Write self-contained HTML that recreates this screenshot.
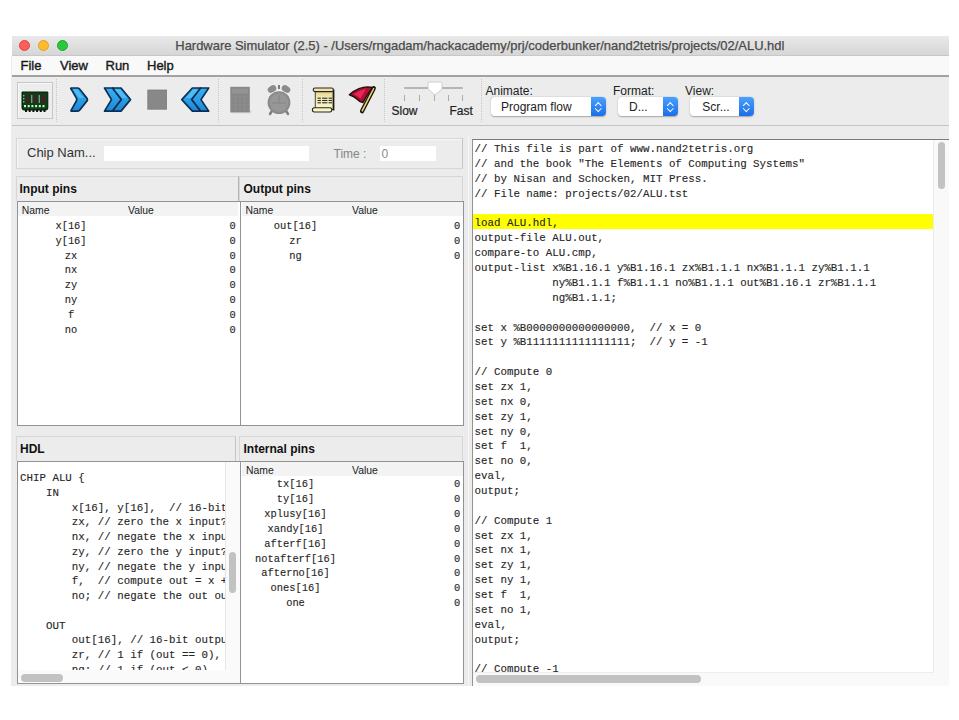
<!DOCTYPE html>
<html><head><meta charset="utf-8">
<style>
*{margin:0;padding:0;box-sizing:border-box}
html,body{width:959px;height:720px;overflow:hidden;background:#fff;font-family:"Liberation Sans",sans-serif;color:#222}
.a{position:absolute}
#win{left:12px;top:36px;width:936.5px;height:650px;background:#ececec;overflow:hidden}
#title{left:0;top:0;width:937px;height:20px;background:linear-gradient(#e9e9e9,#d6d6d6);border-bottom:1px solid #c8c8c8}
.tl{width:11px;height:11px;border-radius:50%;top:4px}
#ttext{left:163.3px;top:2px;font-size:12.95px;color:#4a4a4a;-webkit-text-stroke:0.25px #4a4a4a;white-space:nowrap}
#menu{left:0;top:20px;width:937px;height:19px;background:#f9f9f9}
.mi{top:2px;font-size:13px;color:#1a1a1a;-webkit-text-stroke:0.4px #1a1a1a}
#tbbg{left:0;top:39px;width:937px;height:50.5px;background:#ececec;border-top:2px solid #a2a2a2;border-bottom:1.5px solid #c4c4c4}
#tb{left:0;top:0;width:0;height:0}
.sep{width:1px;border-left:1px dotted #c6c6c6}
.hdr{font-weight:bold;font-size:12px;color:#111}
.tbl{background:#fff;border:1px solid #939393}
.th{font-size:10.4px;color:#222;margin-top:1.8px}
.row{font-family:"Liberation Mono",monospace;font-size:10.4px;color:#262626;-webkit-text-stroke:0.12px #262626;white-space:pre}
#code{left:459.5px;top:103px;width:477px;height:547px;background:#fff;border-top:1.5px solid #7a7a7a;border-left:1px solid #939393;overflow:hidden}
.cl{white-space:pre;font-family:"Liberation Mono",monospace;font-size:10.8px;color:#262626;-webkit-text-stroke:0.12px #262626;line-height:14.87px;height:14.87px}
.hl{white-space:pre;font-family:"Liberation Mono",monospace;font-size:10.8px;color:#262626;-webkit-text-stroke:0.12px #262626;line-height:14.75px;height:14.75px}
.combo{height:19px;background:#fff;border-radius:4px;box-shadow:0 0.5px 1.5px rgba(0,0,0,0.3)}
.combo span{position:absolute;top:3.3px;font-size:12px;color:#222;white-space:nowrap}
.combo i{position:absolute;right:0;top:0;width:15px;height:19px;background:linear-gradient(#4aa0ff,#1a6fe8);border-radius:0 4px 4px 0}
.combo i:before{content:"";position:absolute;left:5px;top:5.5px;width:3.5px;height:3.5px;border-left:1.3px solid #fff;border-top:1.3px solid #fff;transform:rotate(45deg)}
.combo i:after{content:"";position:absolute;left:5px;top:9.2px;width:3.5px;height:3.5px;border-right:1.3px solid #fff;border-bottom:1.3px solid #fff;transform:rotate(45deg)}
.hbox{border:1px solid #d6d6d6;border-bottom:none;background:#ececec}
.thr{background:#f3f3f3}
</style></head><body>
<div class="a" style="left:10.5px;top:56px;width:2px;height:630px;background:#ebebeb"></div>
<div id="win" class="a">
  <div id="title" class="a">
    <div class="a tl" style="left:7px;background:#fc5f57;border:0.5px solid #e0443e"></div>
    <div class="a tl" style="left:25.5px;background:#fdbc2e;border:0.5px solid #dea123"></div>
    <div class="a tl" style="left:44.5px;background:#28c840;border:0.5px solid #1aab29"></div>
    <div id="ttext" class="a">Hardware Simulator (2.5) - /Users/rngadam/hackacademy/prj/coderbunker/nand2tetris/projects/02/ALU.hdl</div>
  </div>
  <div id="menu" class="a">
    <div class="a mi" style="left:8.5px">File</div>
    <div class="a mi" style="left:48px">View</div>
    <div class="a mi" style="left:93.5px">Run</div>
    <div class="a mi" style="left:135px">Help</div>
  </div>
  <div id="tbbg" class="a"></div>
  <div id="tb" class="a">
    <div class="a" style="left:5px;top:46.3px;width:36px;height:36.3px;border:1px solid #c6c6c6;background:#ededed;box-shadow:inset 1px 1px 0 #f8f8f8"></div>
    <div class="a sep" style="left:44px;top:43px;height:43px"></div>
    <div class="a sep" style="left:205.5px;top:43px;height:43px"></div>
    <div class="a sep" style="left:290px;top:43px;height:43px"></div>
    <div class="a sep" style="left:372px;top:43px;height:43px"></div>
    <div class="a" style="left:391.5px;top:50.6px;width:59px;height:2px;background:#b5b5b5;border-radius:1px"></div>
    <div class="a" style="left:392px;top:58.8px;width:1px;height:6px;background:#aaa"></div>
    <div class="a" style="left:406.5px;top:58.8px;width:1px;height:6px;background:#aaa"></div>
    <div class="a" style="left:421.5px;top:58.8px;width:1px;height:6px;background:#aaa"></div>
    <div class="a" style="left:435.5px;top:58.8px;width:1px;height:6px;background:#aaa"></div>
    <div class="a" style="left:449.6px;top:58.8px;width:1px;height:6px;background:#aaa"></div>
    <svg class="a" style="left:414.5px;top:44.5px" width="16" height="15" viewBox="0 0 16 15">
      <path d="M1 2.5 Q1 1 2.5 1 H13.5 Q15 1 15 2.5 V8 L8 14 L1 8 Z" fill="#fff" stroke="#c4c4c4" stroke-width="0.8"/>
    </svg>
    <div class="a" style="left:379.5px;top:68.3px;font-size:12px;color:#222;-webkit-text-stroke:0.2px #222">Slow</div>
    <div class="a" style="left:437.5px;top:68.3px;font-size:12px;color:#222;-webkit-text-stroke:0.2px #222">Fast</div>
    <div class="a sep" style="left:468.7px;top:43px;height:43px"></div>
    <div class="a" style="left:473.5px;top:47.5px;font-size:12px;color:#222">Animate:</div>
    <div class="a" style="left:601px;top:47.5px;font-size:12px;color:#222">Format:</div>
    <div class="a" style="left:673px;top:47.5px;font-size:12px;color:#222">View:</div>
    <div class="a combo" style="left:479px;top:61px;width:115px"><span style="left:10px">Program flow</span><i></i></div>
    <div class="a combo" style="left:606px;top:61px;width:60px"><span style="left:11px">D...</span><i></i></div>
    <div class="a combo" style="left:677.8px;top:61px;width:64px"><span style="left:12.5px">Scr...</span><i></i></div>
  </div>

  <!-- chip name panel -->
  <div class="a" style="left:4px;top:101.5px;width:446.5px;height:31px;border:1px solid #d6d6d6;border-right-color:#c4c4c4;box-shadow:inset 1px 1px 0 #f6f6f6"></div>
  <div class="a" style="left:15px;top:109px;font-size:13px;color:#333">Chip Nam...</div>
  <div class="a" style="left:91.5px;top:109.5px;width:205px;height:15.5px;background:#fff"></div>
  <div class="a" style="left:321.5px;top:111.3px;font-size:12px;color:#858585">Time :</div>
  <div class="a" style="left:367.5px;top:109.5px;width:56.5px;height:15.5px;background:#fff"></div>
  <div class="a" style="left:369.5px;top:111.3px;font-size:12px;color:#8a8a8a">0</div>

  <!-- input pins -->
  <div class="a hbox" style="left:4px;top:140px;width:223px;height:25px;border-right-color:#b4b4b4"></div>
  <div class="a hdr" style="left:7.5px;top:146px">Input pins</div>
  <div class="a tbl" style="left:5px;top:165px;width:224px;height:225px"></div>
  <div class="a thr" style="left:6px;top:166px;width:219.5px;height:13.5px"></div>
  <div class="a th" style="left:9.8px;top:167px">Name</div>
  <div class="a th" style="left:116px;top:167px">Value</div>
  <div class="a row" style="left:59.0px;top:184.00px;width:120px;margin-left:-60px;text-align:center">x[16]</div>
<div class="a row" style="left:217.5px;top:184.00px">0</div>
<div class="a row" style="left:59.0px;top:198.80px;width:120px;margin-left:-60px;text-align:center">y[16]</div>
<div class="a row" style="left:217.5px;top:198.80px">0</div>
<div class="a row" style="left:59.0px;top:213.60px;width:120px;margin-left:-60px;text-align:center">zx</div>
<div class="a row" style="left:217.5px;top:213.60px">0</div>
<div class="a row" style="left:59.0px;top:228.40px;width:120px;margin-left:-60px;text-align:center">nx</div>
<div class="a row" style="left:217.5px;top:228.40px">0</div>
<div class="a row" style="left:59.0px;top:243.20px;width:120px;margin-left:-60px;text-align:center">zy</div>
<div class="a row" style="left:217.5px;top:243.20px">0</div>
<div class="a row" style="left:59.0px;top:258.00px;width:120px;margin-left:-60px;text-align:center">ny</div>
<div class="a row" style="left:217.5px;top:258.00px">0</div>
<div class="a row" style="left:59.0px;top:272.80px;width:120px;margin-left:-60px;text-align:center">f</div>
<div class="a row" style="left:217.5px;top:272.80px">0</div>
<div class="a row" style="left:59.0px;top:287.60px;width:120px;margin-left:-60px;text-align:center">no</div>
<div class="a row" style="left:217.5px;top:287.60px">0</div>

  <!-- output pins -->
  <div class="a hbox" style="left:226.5px;top:140px;width:224.5px;height:25px"></div>
  <div class="a hdr" style="left:231.5px;top:146px">Output pins</div>
  <div class="a tbl" style="left:228px;top:165px;width:224px;height:225px"></div>
  <div class="a thr" style="left:229.5px;top:166px;width:221.5px;height:13.5px"></div>
  <div class="a th" style="left:233.5px;top:167px">Name</div>
  <div class="a th" style="left:340px;top:167px">Value</div>
  <div class="a row" style="left:283.5px;top:183.80px;width:120px;margin-left:-60px;text-align:center">out[16]</div>
<div class="a row" style="left:442.0px;top:183.80px">0</div>
<div class="a row" style="left:283.5px;top:198.75px;width:120px;margin-left:-60px;text-align:center">zr</div>
<div class="a row" style="left:442.0px;top:198.75px">0</div>
<div class="a row" style="left:283.5px;top:213.70px;width:120px;margin-left:-60px;text-align:center">ng</div>
<div class="a row" style="left:442.0px;top:213.70px">0</div>

  <!-- HDL -->
  <div class="a hbox" style="left:4px;top:399.5px;width:219.5px;height:25.5px;border-right-color:#c4c4c4"></div>
  <div class="a hdr" style="left:8px;top:406px">HDL</div>
  <div class="a tbl" style="left:5px;top:425px;width:224.5px;height:223px;border-right:none;overflow:hidden">
    <div class="a" style="left:0;top:0;width:206.5px;height:208px;overflow:hidden">
      <div class="a" style="left:2px;top:9px"><div class="hl">CHIP ALU {</div>
<div class="hl">    IN</div>
<div class="hl">        x[16], y[16],  // 16-bit inputs</div>
<div class="hl">        zx, // zero the x input?</div>
<div class="hl">        nx, // negate the x input?</div>
<div class="hl">        zy, // zero the y input?</div>
<div class="hl">        ny, // negate the y input?</div>
<div class="hl">        f,  // compute out = x + y (if 1) or x &amp; y (if 0)</div>
<div class="hl">        no; // negate the out output?</div>
<div class="hl"> </div>
<div class="hl">    OUT</div>
<div class="hl">        out[16], // 16-bit output</div>
<div class="hl">        zr, // 1 if (out == 0), 0 otherwise</div>
<div class="hl">        ng; // 1 if (out &lt; 0),  0 otherwise</div></div>
    </div>
    <div class="a" style="left:206.5px;top:0;width:17px;height:208px;background:#fafafa;border-left:1px solid #e6e6e6"></div>
    <div class="a" style="left:210.5px;top:89.8px;width:7.5px;height:41px;background:#c2c2c2;border-radius:4px"></div>
    <div class="a" style="left:0;top:208px;width:224px;height:14px;background:#fafafa"></div>
    <div class="a" style="left:3px;top:212px;width:42px;height:7.5px;background:#c2c2c2;border-radius:4px"></div>
  </div>

  <!-- internal pins -->
  <div class="a hbox" style="left:226.5px;top:399.5px;width:224px;height:25.5px"></div>
  <div class="a hdr" style="left:231.5px;top:406px">Internal pins</div>
  <div class="a tbl" style="left:228px;top:425px;width:224px;height:223px"></div>
  <div class="a thr" style="left:229.5px;top:426px;width:221.5px;height:13.5px"></div>
  <div class="a th" style="left:234px;top:427px">Name</div>
  <div class="a th" style="left:340px;top:427px">Value</div>
  <div class="a row" style="left:283.5px;top:442.20px;width:120px;margin-left:-60px;text-align:center">tx[16]</div>
<div class="a row" style="left:442.0px;top:442.20px">0</div>
<div class="a row" style="left:283.5px;top:457.07px;width:120px;margin-left:-60px;text-align:center">ty[16]</div>
<div class="a row" style="left:442.0px;top:457.07px">0</div>
<div class="a row" style="left:283.5px;top:471.94px;width:120px;margin-left:-60px;text-align:center">xplusy[16]</div>
<div class="a row" style="left:442.0px;top:471.94px">0</div>
<div class="a row" style="left:283.5px;top:486.81px;width:120px;margin-left:-60px;text-align:center">xandy[16]</div>
<div class="a row" style="left:442.0px;top:486.81px">0</div>
<div class="a row" style="left:283.5px;top:501.68px;width:120px;margin-left:-60px;text-align:center">afterf[16]</div>
<div class="a row" style="left:442.0px;top:501.68px">0</div>
<div class="a row" style="left:283.5px;top:516.55px;width:120px;margin-left:-60px;text-align:center">notafterf[16]</div>
<div class="a row" style="left:442.0px;top:516.55px">0</div>
<div class="a row" style="left:283.5px;top:531.42px;width:120px;margin-left:-60px;text-align:center">afterno[16]</div>
<div class="a row" style="left:442.0px;top:531.42px">0</div>
<div class="a row" style="left:283.5px;top:546.29px;width:120px;margin-left:-60px;text-align:center">ones[16]</div>
<div class="a row" style="left:442.0px;top:546.29px">0</div>
<div class="a row" style="left:283.5px;top:561.16px;width:120px;margin-left:-60px;text-align:center">one</div>
<div class="a row" style="left:442.0px;top:561.16px">0</div>

  <div class="a" style="left:455.5px;top:101px;width:1px;height:549px;background:#f7f7f7"></div>
  <div id="code" class="a">
    <div class="a" style="left:0;top:73.95px;width:461px;height:14.6px;background:#ffff00"></div>
    <div class="a" style="left:2px;top:2.2px;width:461px"><div class="cl">// This file is part of www.nand2tetris.org</div>
<div class="cl">// and the book &quot;The Elements of Computing Systems&quot;</div>
<div class="cl">// by Nisan and Schocken, MIT Press.</div>
<div class="cl">// File name: projects/02/ALU.tst</div>
<div class="cl"> </div>
<div class="cl">load ALU.hdl,</div>
<div class="cl">output-file ALU.out,</div>
<div class="cl">compare-to ALU.cmp,</div>
<div class="cl">output-list x%B1.16.1 y%B1.16.1 zx%B1.1.1 nx%B1.1.1 zy%B1.1.1</div>
<div class="cl">            ny%B1.1.1 f%B1.1.1 no%B1.1.1 out%B1.16.1 zr%B1.1.1</div>
<div class="cl">            ng%B1.1.1;</div>
<div class="cl"> </div>
<div class="cl">set x %B0000000000000000,  // x = 0</div>
<div class="cl">set y %B1111111111111111;  // y = -1</div>
<div class="cl"> </div>
<div class="cl">// Compute 0</div>
<div class="cl">set zx 1,</div>
<div class="cl">set nx 0,</div>
<div class="cl">set zy 1,</div>
<div class="cl">set ny 0,</div>
<div class="cl">set f  1,</div>
<div class="cl">set no 0,</div>
<div class="cl">eval,</div>
<div class="cl">output;</div>
<div class="cl"> </div>
<div class="cl">// Compute 1</div>
<div class="cl">set zx 1,</div>
<div class="cl">set nx 1,</div>
<div class="cl">set zy 1,</div>
<div class="cl">set ny 1,</div>
<div class="cl">set f  1,</div>
<div class="cl">set no 1,</div>
<div class="cl">eval,</div>
<div class="cl">output;</div>
<div class="cl"> </div>
<div class="cl">// Compute -1</div>
<div class="cl">set zx 1,</div>
<div class="cl">set nx 1,</div></div>
    <div class="a" style="left:460.8px;top:0;width:16px;height:546px;background:#f9f9f9;border-left:1px solid #ececec"></div>
    <div class="a" style="left:465.3px;top:2px;width:7.5px;height:47px;background:#c2c2c2;border-radius:4px"></div>
    <div class="a" style="left:0;top:531.5px;width:461px;height:15px;background:#f9f9f9;border-top:1px solid #eeeeee"></div>
    <div class="a" style="left:3.1px;top:535.3px;width:225.6px;height:7.3px;background:#c2c2c2;border-radius:4px"></div>
  </div>
</div>
<svg class="a" style="left:0;top:0" width="959" height="130" viewBox="0 0 959 130">
  <defs>
    <linearGradient id="bl" x1="0" y1="0" x2="0" y2="1"><stop offset="0" stop-color="#38b0f0"/><stop offset="0.5" stop-color="#2a9ee6"/><stop offset="1" stop-color="#1f86d2"/></linearGradient>
    <linearGradient id="rd" x1="0" y1="0" x2="1" y2="1"><stop offset="0" stop-color="#e0205a"/><stop offset="1" stop-color="#a80c2c"/></linearGradient>
  </defs>
  <!-- chip -->
  <g>
    <path d="M22 92 H47.8 V108 Q47.8 110 46 110 H24 Q22 110 22 108 Z" fill="#0e3f16" stroke="#021a06" stroke-width="1"/>
    <rect x="25" y="94.5" width="6" height="9" fill="#2e2a25"/><rect x="32.5" y="94.5" width="6" height="9" fill="#2e2a25"/><rect x="40" y="94.5" width="6" height="9" fill="#2e2a25"/>
    <g fill="#6ccf7a"><rect x="23" y="95" width="1.4" height="1.4"/><rect x="23" y="98" width="1.4" height="1.4"/><rect x="23" y="101" width="1.4" height="1.4"/><rect x="31.2" y="95" width="1.1" height="8"/><rect x="38.7" y="95" width="1.1" height="8"/></g>
    <g fill="#c4f5c8"><rect x="24" y="105" width="2" height="2.2"/><rect x="27.7" y="105" width="2" height="2.2"/><rect x="31.4" y="105" width="2" height="2.2"/><rect x="35.1" y="105" width="2" height="2.2"/><rect x="38.8" y="105" width="2" height="2.2"/><rect x="42.5" y="105" width="2" height="2.2"/></g>
    <g fill="#111"><rect x="25" y="110" width="2" height="2"/><rect x="28.7" y="110" width="2" height="2"/><rect x="32.4" y="110" width="2" height="2"/><rect x="36.1" y="110" width="2" height="2"/><rect x="39.8" y="110" width="2" height="2"/><rect x="43.5" y="110" width="2" height="2"/></g>
  </g>
  <!-- single > -->
  <path d="M71.5 88 Q70.5 88 71 89 L71 88 H77.8 Q79 88 80 89.5 L87.2 98.6 Q87.8 99.6 87.2 100.6 L80 109.7 Q79 111.1 77.8 111.1 H71.5 Q70.6 111.1 71.2 110.2 L76.4 101 Q77.2 99.6 76.4 98.2 L71.2 89 Z" fill="url(#bl)" stroke="#0b2f55" stroke-width="1.7" stroke-linejoin="round"/>
  <path d="M73 89.5 H77 L84 98 H79 Z" fill="#5cc4f8" opacity="0.7"/>
  <!-- double >> -->
  <path d="M104.5 88 H112.6 L121.4 99.6 L112.6 111.1 H104.5 L111.5 99.6 Z" fill="url(#bl)" stroke="#0b2f55" stroke-width="1.7" stroke-linejoin="round"/>
  <path d="M112.6 88 H121 L130.5 99.6 L121 111.1 H112.6 L121.4 99.6 Z" fill="url(#bl)" stroke="#0b2f55" stroke-width="1.7" stroke-linejoin="round"/>
  <path d="M114.5 89.5 H120 L127.5 98 H122 Z" fill="#5cc4f8" opacity="0.7"/>
  <!-- stop -->
  <rect x="147.8" y="90" width="18.8" height="19.2" fill="#888" stroke="#7c7c7c" stroke-width="0.8"/>
  <!-- << -->
  <path d="M208.7 88 H200.4 L191.6 99.6 L200.4 111.1 H208.7 L201 99.6 Z" fill="url(#bl)" stroke="#0b2f55" stroke-width="1.7" stroke-linejoin="round"/>
  <path d="M200.4 88 H192.4 L181.8 99.6 L192.4 111.1 H200.4 L191.6 99.6 Z" fill="url(#bl)" stroke="#0b2f55" stroke-width="1.7" stroke-linejoin="round"/>
  <path d="M198.5 89.5 H193 L185.5 98 H191 Z" fill="#5cc4f8" opacity="0.7"/>
  <!-- calculator -->
  <rect x="230.3" y="86.8" width="19.5" height="25.7" fill="#878787"/>
  <rect x="232" y="88.5" width="16" height="5" fill="#939393"/>
  <g stroke="#959595" stroke-width="0.6" opacity="0.8"><line x1="231" y1="97" x2="249" y2="97"/><line x1="231" y1="101" x2="249" y2="101"/><line x1="231" y1="105" x2="249" y2="105"/><line x1="231" y1="109" x2="249" y2="109"/><line x1="235.5" y1="95" x2="235.5" y2="112"/><line x1="240" y1="95" x2="240" y2="112"/><line x1="244.5" y1="95" x2="244.5" y2="112"/></g>
  <path d="M250 110 L251.5 111.5 L250.5 113.3 H233 L231.5 112.5 H250 Z" fill="#bdbdbd" opacity="0.6"/>
  <!-- clock -->
  <g>
    <ellipse cx="272" cy="89" rx="4.6" ry="3.3" transform="rotate(-30 272 89)" fill="#8b8b8b"/>
    <ellipse cx="286" cy="89" rx="4.6" ry="3.3" transform="rotate(30 286 89)" fill="#8b8b8b"/>
    <rect x="278" y="85" width="2" height="4" fill="#7a7a7a"/>
    <line x1="272.5" y1="110" x2="270" y2="114" stroke="#7e7e7e" stroke-width="2.4" stroke-linecap="round"/>
    <line x1="285.5" y1="110" x2="288" y2="114" stroke="#7e7e7e" stroke-width="2.4" stroke-linecap="round"/>
    <circle cx="279" cy="102.6" r="11.4" fill="#8a8a8a"/>
    <circle cx="279" cy="102.6" r="9.3" fill="#979797"/>
    <path d="M279 95 V103 M272 103 H286" stroke="#858585" stroke-width="0.9"/>
  </g>
  <!-- scroll -->
  <defs><linearGradient id="sc" x1="0" y1="0" x2="0" y2="1"><stop offset="0" stop-color="#e2d08a"/><stop offset="0.35" stop-color="#f0e9b0"/><stop offset="1" stop-color="#f8f6d4"/></linearGradient></defs>
  <path d="M315.3 90.5 H333.2 V109.5 H315.3 Z" fill="url(#sc)" stroke="#3a3420" stroke-width="0.9"/>
  <path d="M333.6 89.5 V110.5" stroke="#1e1a10" stroke-width="1.6"/>
  <path d="M315 88 H331.5 Q333.4 88 333.4 89.8 Q333.4 91.6 331.5 91.6 H315 Q313.2 91.6 313.2 89.8 Q313.2 88 315 88 Z" fill="#eee3b0" stroke="#2a2616" stroke-width="1.1"/>
  <path d="M314.3 107.7 H330 Q331.8 107.7 331.8 109.85 Q331.8 112 330 112 H314.3 Q312.4 112 312.4 109.85 Q312.4 107.7 314.3 107.7 Z" fill="#f7f5cc" stroke="#2a2616" stroke-width="1.1"/>
  <g stroke="#2e2e22" stroke-width="1.1"><line x1="317.5" y1="98.2" x2="332" y2="98.2"/><line x1="317.5" y1="100.5" x2="332" y2="100.5"/><line x1="317.5" y1="102.8" x2="332" y2="102.8"/></g>
  <g stroke="#f3efc4" stroke-width="1.2"><line x1="321.5" y1="97" x2="321.5" y2="104"/><line x1="328" y1="97" x2="328" y2="104"/></g>
  <!-- flag -->
  <path d="M373.8 88.2 L362 111.2" stroke="#1a150a" stroke-width="4.2" stroke-linecap="round"/>
  <path d="M373.6 88.6 L362.2 110.8" stroke="#e6cf78" stroke-width="1.6" stroke-linecap="round"/>
  <path d="M372.5 87.6 Q366 86.2 359 88.6 Q353.5 90.8 349.4 94.8 Q354.5 96.5 357.5 99.5 Q360 102.3 362.8 102.6 Q366.5 95.5 372.5 87.6 Z" fill="#b80a34" stroke="#1a150a" stroke-width="1.5" stroke-linejoin="round"/>
  <path d="M366 89.2 Q359 90.2 353.6 94.6 Q357.5 95.8 360.5 98.6 Z" fill="#e8305e" opacity="0.85"/>
</svg></body></html>
